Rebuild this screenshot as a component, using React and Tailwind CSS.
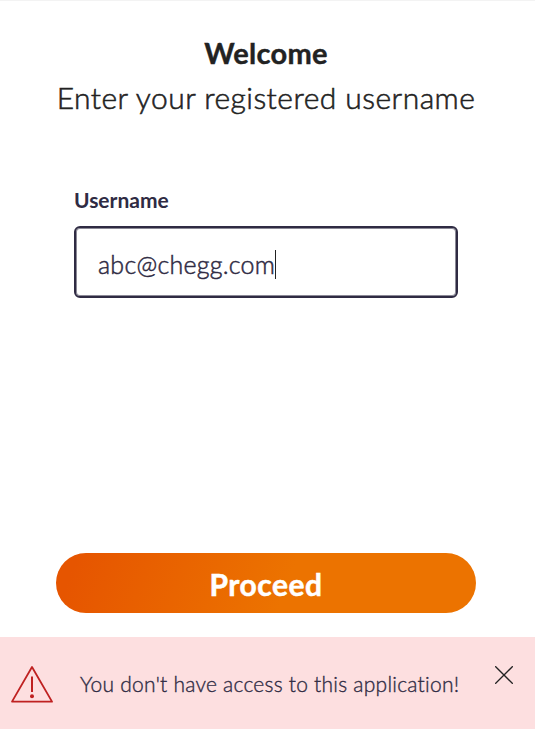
import { useState } from "react";

function WarningIcon() {
  return (
    <svg
      className="h-[38px] w-[42px] shrink-0 text-[#bf2121]"
      viewBox="0 0 42 38"
      fill="none"
      stroke="currentColor"
      strokeWidth="1.8"
      aria-hidden="true"
    >
      <path d="M21 2L41 36.6H1L21 2Z" strokeLinejoin="round" />
      <path d="M21 11.5V27" strokeWidth="2" />
      <circle cx="21" cy="31.2" r="2" fill="currentColor" stroke="none" />
    </svg>
  );
}

function CloseIcon() {
  return (
    <svg
      className="h-[18px] w-[18px]"
      viewBox="0 0 18 18"
      fill="none"
      stroke="currentColor"
      strokeWidth="1.3"
      aria-hidden="true"
    >
      <path d="M0.2 0.2L17.8 17.8M17.8 0.2L0.2 17.8" />
    </svg>
  );
}

export default function App() {
  const [showError, setShowError] = useState(true);

  return (
    <div className="flex h-[729px] w-[535px] flex-col border-t border-[#f3f3f3] bg-white font-['Lato',sans-serif] text-[#222222]">
      <header className="pt-[32px] text-center">
        <h1 className="pr-[3px] text-[29px] leading-10 font-bold tracking-[0.3px] whitespace-nowrap [-webkit-text-stroke:0.4px_currentColor]">
          Welcome
        </h1>
        <p className="mt-[4px] pr-[3px] text-[30px] leading-10 font-light tracking-[0.46px] whitespace-nowrap [-webkit-text-stroke:0.55px_currentColor]">
          Enter your registered username
        </p>
      </header>

      <div className="mt-[71px] px-[74px] text-[#2f2b43]">
        <label className="block text-[21px] leading-6 font-bold">
          Username
        </label>
        <div className="mt-[14px] flex h-[72px] w-[384px] items-center rounded-md border-2 border-[#2f2b43] pt-1 pl-[22px] shadow-[inset_0_0_0_1px_#8b8996]">
          <span className="text-[25px] leading-8 font-light tracking-[0.25px] whitespace-nowrap [-webkit-text-stroke:0.5px_currentColor]">
            abc@chegg.com
          </span>
          <span className="h-[29px] w-px bg-[#222222]" />
        </div>
      </div>

      <button
        type="button"
        className="mt-auto mb-6 ml-[56px] flex h-[60px] w-[420px] shrink-0 items-center justify-center rounded-full bg-[linear-gradient(110deg,#e65500_5%,#ec7300_55%)] pt-0.5 text-[30px] leading-10 font-bold tracking-[0.5px] text-white [-webkit-text-stroke:0.5px_currentColor]"
      >
        Proceed
      </button>

      {showError && (
        <div className="flex h-[92px] shrink-0 items-start bg-[#fddfe0] pt-[28px] pl-[11px]">
          <WarningIcon />
          <p className="mt-[3px] ml-[27px] w-[380px] text-[21px] leading-8 font-light tracking-[0.24px] whitespace-nowrap text-[#2f2b43] [-webkit-text-stroke:0.35px_currentColor] [font-variant-ligatures:none]">
            You don't have access to this application!
          </p>
          <button
            type="button"
            aria-label="Close"
            className="mt-[1px] ml-[35px]"
            onClick={() => setShowError(false)}
          >
            <CloseIcon />
          </button>
        </div>
      )}
    </div>
  );
}
